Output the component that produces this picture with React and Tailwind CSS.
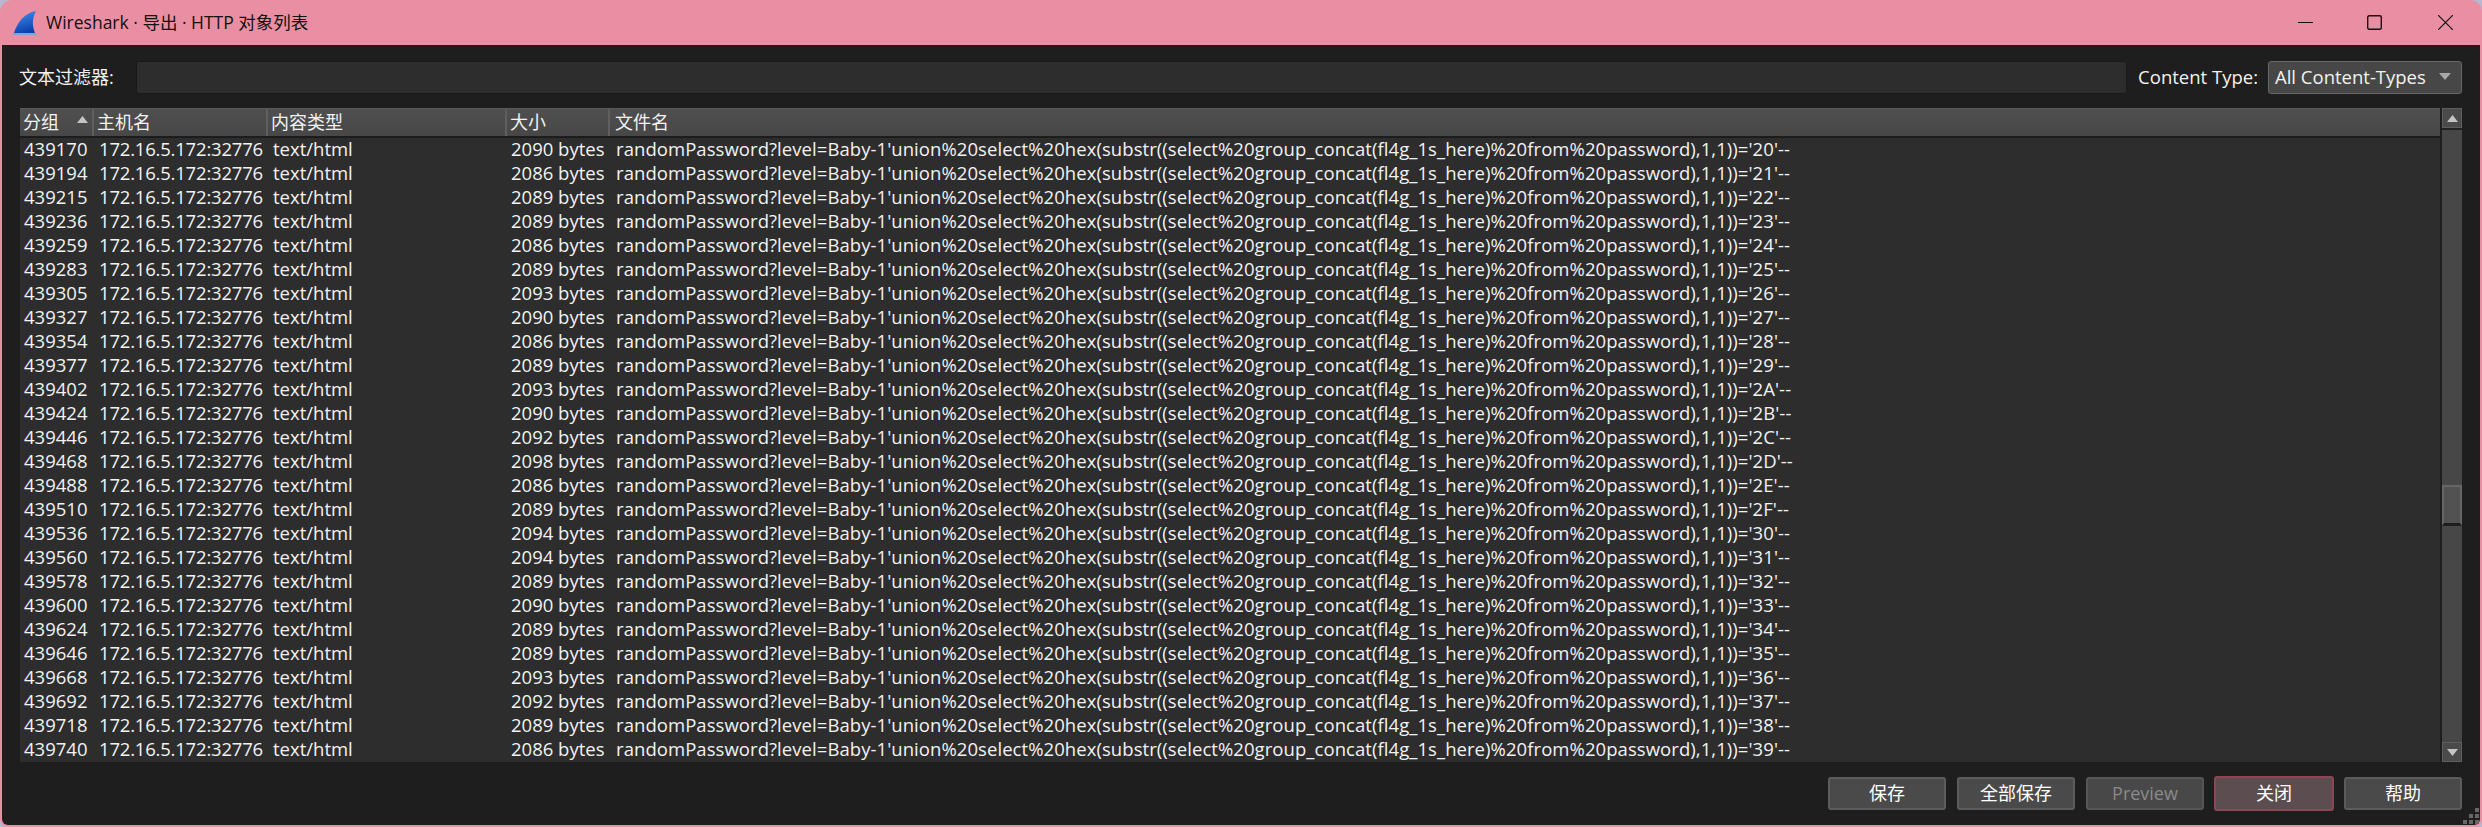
const rows = [
  ["439170", "2090", "20"], ["439194", "2086", "21"], ["439215", "2089", "22"], ["439236", "2089", "23"],
  ["439259", "2086", "24"], ["439283", "2089", "25"], ["439305", "2093", "26"], ["439327", "2090", "27"],
  ["439354", "2086", "28"], ["439377", "2089", "29"], ["439402", "2093", "2A"], ["439424", "2090", "2B"],
  ["439446", "2092", "2C"], ["439468", "2098", "2D"], ["439488", "2086", "2E"], ["439510", "2089", "2F"],
  ["439536", "2094", "30"], ["439560", "2094", "31"], ["439578", "2089", "32"], ["439600", "2090", "33"],
  ["439624", "2089", "34"], ["439646", "2089", "35"], ["439668", "2093", "36"], ["439692", "2092", "37"],
  ["439718", "2089", "38"], ["439740", "2086", "39"],
];

const font = "[font-family:'Open_Sans','Noto_Sans_CJK_SC',sans-serif]";

function Logo() {
  return (
    <svg width="24" height="26" viewBox="0 0 24 26">
      <defs>
        <linearGradient id="fin" x1="0.2" y1="0" x2="0.5" y2="1">
          <stop offset="0" stopColor="#3f8fe8" />
          <stop offset="1" stopColor="#0b3fae" />
        </linearGradient>
      </defs>
      <path d="M1 23 C4 13 11 3 23 1 C19 8 19 16 22 23 Z" fill="url(#fin)" />
      <path d="M0 23 H23 L24 25 H0 Z" fill="#7fa6c8" />
    </svg>
  );
}

function HeaderCell({ className, children }) {
  return (
    <div className={`flex h-full items-center border-r-2 border-r-[#5f5f5f] pl-[3px] ${className}`}>
      {children}
    </div>
  );
}

function Button({ children, className = "h-[33px] w-[118px] border-[#5c5c5c] bg-[#4a4a4a] text-white" }) {
  return (
    <button className={`flex items-center justify-center rounded-[3px] border-2 text-[18px] ${className}`}>
      {children}
    </button>
  );
}

export default function App() {
  return (
    <div className="h-[827px] w-[2482px] bg-[#b5b8cf]">
      <div className={`flex h-full flex-col overflow-hidden rounded-t-[12px] rounded-b-[8px] bg-[#ea8fa3] ${font}`}>
        <div className="flex h-[45px] shrink-0 items-center pl-[13px]">
          <Logo />
          <span className="ml-[9px] text-[17.5px] text-[#111]">Wireshark · 导出 · HTTP 对象列表</span>
          <div className="ml-auto flex items-center">
            <svg width="15" height="15" viewBox="0 0 15 15" className="mr-[54px]"><path d="M0 7.5 H15" stroke="#111" strokeWidth="1" /></svg>
            <svg width="15" height="15" viewBox="0 0 15 15" className="mr-[56px]"><rect x="0.7" y="0.7" width="13.6" height="13.6" rx="1.5" fill="none" stroke="#111" strokeWidth="1.4" /></svg>
            <svg width="15" height="15" viewBox="0 0 15 15" className="mr-[29px]"><path d="M0 0 L15 15 M15 0 L0 15" stroke="#111" strokeWidth="1.2" /></svg>
          </div>
        </div>

        <div className="relative mx-[2px] mb-[2px] flex min-h-0 flex-1 flex-col rounded-b-[6px] bg-[#1e1e1e] text-[#f2f2f2]">
          <div className="flex h-[63px] shrink-0 items-center pl-[17px] pr-[18px] pt-[1px]">
            <span className="w-[117px] shrink-0 text-[18px]">文本过滤器:</span>
            <div className="h-[33px] flex-1 rounded-[3px] border border-[#191919] bg-[#2d2d2d]" />
            <span className="ml-[11px] mr-[10px] text-[18.5px]">Content Type:</span>
            <div className="flex h-[33px] w-[194px] items-center justify-between rounded-[3px] border border-[#666] bg-[#474747] pl-[6px] pr-[10px] text-[18.5px]">
              <span>All Content-Types</span>
              <svg width="12" height="8" viewBox="0 0 12 8"><path d="M0 0 H12 L6 7 Z" fill="#a8a8a8" /></svg>
            </div>
          </div>

          <div className="flex min-h-0 shrink-0 pl-[18px] pr-[18px]">
            <div className="flex min-w-0 flex-1 flex-col">
              <div className="flex h-[30px] shrink-0 items-center border-t border-[#5a5a5a] border-b-2 border-b-[#1c1c1c] bg-gradient-to-b from-[#4f4f4f] to-[#474747] text-[18px]">
                <HeaderCell className="w-[74px] justify-between pr-[4px]">
                  <span>分组</span>
                  <svg width="11" height="7" viewBox="0 0 11 7" className="mb-[6px]"><path d="M5.5 0 L11 7 H0 Z" fill="#c4c4c4" /></svg>
                </HeaderCell>
                <HeaderCell className="w-[174px]">主机名</HeaderCell>
                <HeaderCell className="w-[239px]">内容类型</HeaderCell>
                <HeaderCell className="w-[103px]">大小</HeaderCell>
                <div className="pl-[5px]">文件名</div>
              </div>
              <div className="flex flex-col bg-[#2d2d2d] text-[18.5px] leading-[22px]">
                {rows.map(([id, size, hex]) => (
                  <div key={id} className="flex h-[24px] whitespace-nowrap">
                    <div className="w-[74px] pl-[4px]">{id}</div>
                    <div className="w-[174px] pl-[5px] tracking-[-0.2px]">172.16.5.172:32776</div>
                    <div className="w-[239px] pl-[5px]">text/html</div>
                    <div className="w-[103px] pl-[4px]">{size} bytes</div>
                    <div className="pl-[6px] tracking-[0.065px]">{`randomPassword?level=Baby-1'union%20select%20hex(substr((select%20group_concat(fl4g_1s_here)%20from%20password),1,1))='${hex}'--`}</div>
                  </div>
                ))}
              </div>
            </div>

            <div className="ml-[2px] flex w-[20px] shrink-0 flex-col bg-[#474747]">
              <div className="flex h-[20px] items-center justify-center border border-[#5e5e5e] bg-[#4a4a4a]">
                <svg width="11" height="7" viewBox="0 0 11 7"><path d="M5.5 0 L11 7 H0 Z" fill="#c4c4c4" /></svg>
              </div>
              <div className="h-[357px] border-t-2 border-[#222]" />
              <div className="h-[41px] border-2 border-[#666] border-b-[3px] border-b-[#1e1e1e] bg-[#525252]" />
              <div className="flex-1" />
              <div className="flex h-[20px] items-center justify-center border border-[#5e5e5e] bg-[#4a4a4a]">
                <svg width="11" height="7" viewBox="0 0 11 7"><path d="M0 0 H11 L5.5 7 Z" fill="#c4c4c4" /></svg>
              </div>
            </div>
          </div>

          <div className="flex flex-1 items-center justify-end gap-[10px] pr-[18px]">
            <Button>保存</Button>
            <div className="ml-[1px]"><Button>全部保存</Button></div>
            <div className="ml-[1px]"><Button className="h-[33px] w-[118px] border-[#565656] bg-[#484848] text-[#8a8a8a]">Preview</Button></div>
            <Button className="h-[35px] w-[120px] border-[#8c4657] bg-[#5c4d50] text-white">关闭</Button>
            <Button>帮助</Button>
          </div>

          <svg width="18" height="18" viewBox="0 0 18 18" className="absolute bottom-0 right-0">
            <g fill="#666">
              <rect x="13" y="1" width="4" height="4" /><rect x="7" y="7" width="4" height="4" /><rect x="13" y="7" width="4" height="4" />
              <rect x="1" y="13" width="4" height="4" /><rect x="7" y="13" width="4" height="4" /><rect x="13" y="13" width="4" height="4" />
            </g>
          </svg>
        </div>
      </div>
    </div>
  );
}
